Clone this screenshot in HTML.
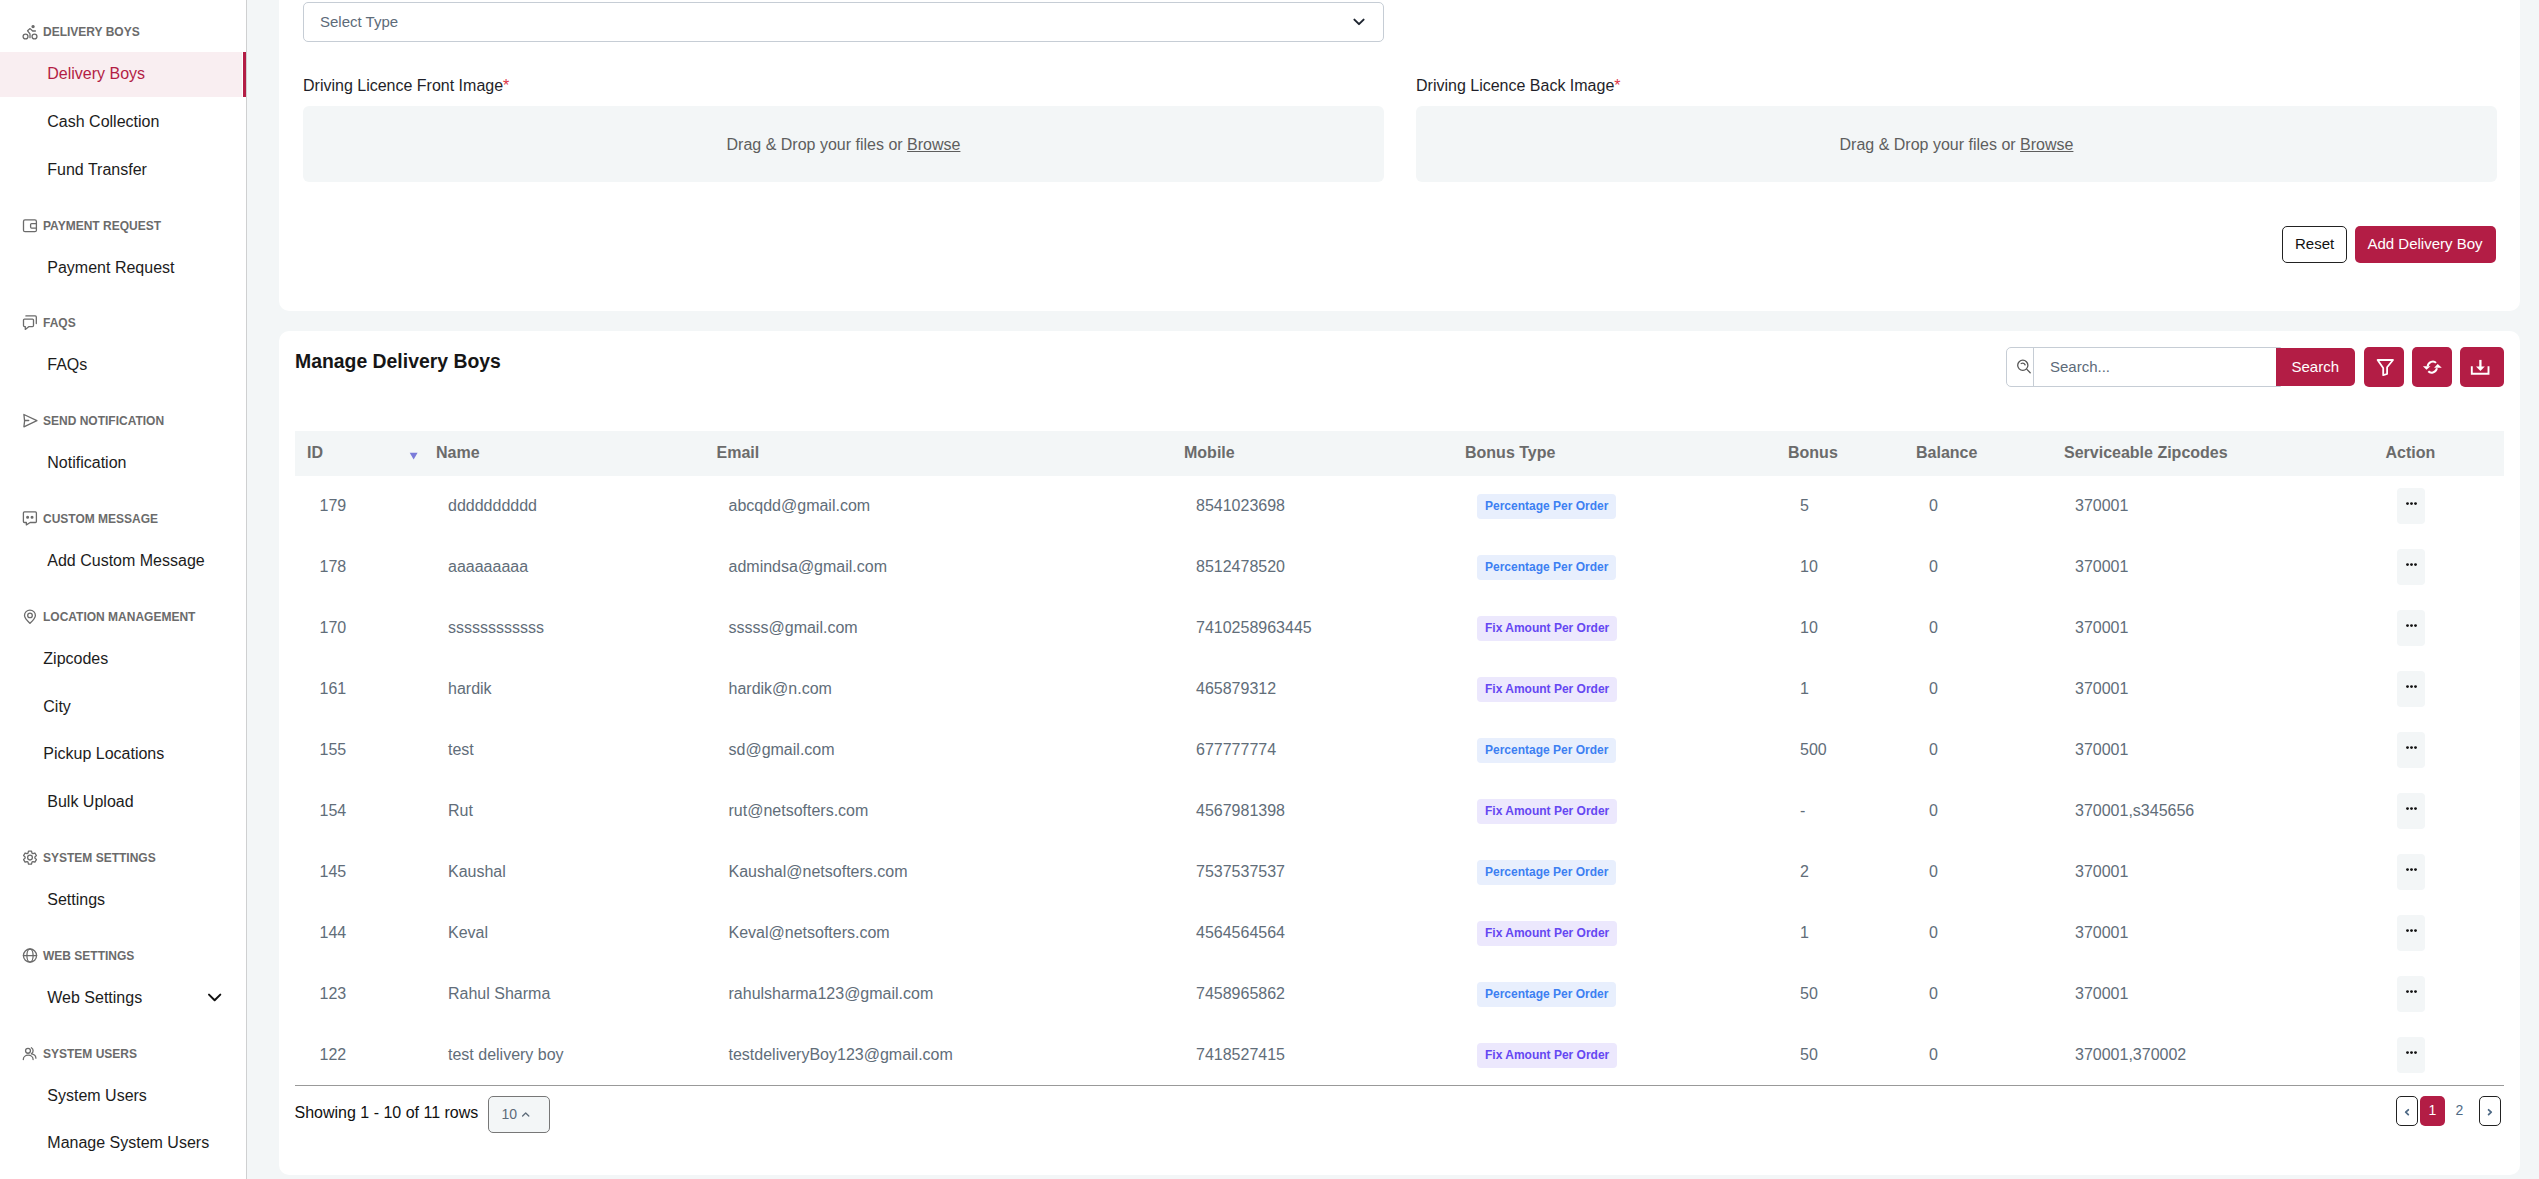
<!DOCTYPE html>
<html><head><meta charset="utf-8"><style>
*{box-sizing:border-box;margin:0;padding:0}
html,body{width:2539px;height:1179px;overflow:hidden}
body{background:#f3f6f7;font-family:"Liberation Sans",sans-serif;position:relative}
.t{position:absolute;white-space:nowrap;line-height:1}
.abs{position:absolute}
svg{position:absolute;overflow:visible}
</style></head><body>
<div class="abs" style="left:0;top:0;width:246px;height:1179px;background:#fff"></div><div class="abs" style="left:246px;top:0;width:1px;height:1179px;background:#cfd0d1"></div><div class="abs" style="left:0;top:52px;width:242px;height:45px;background:#f9eef1"></div><div class="abs" style="left:243px;top:52px;width:3px;height:45px;background:#b31d45"></div><div class="t" style="left:43px;top:26px;font-size:12px;color:#6b6b6b;font-weight:bold;">DELIVERY BOYS</div>
<div class="t" style="left:43px;top:220px;font-size:12px;color:#6b6b6b;font-weight:bold;">PAYMENT REQUEST</div>
<div class="t" style="left:43px;top:317px;font-size:12px;color:#6b6b6b;font-weight:bold;">FAQS</div>
<div class="t" style="left:43px;top:415px;font-size:12px;color:#6b6b6b;font-weight:bold;">SEND NOTIFICATION</div>
<div class="t" style="left:43px;top:513px;font-size:12px;color:#6b6b6b;font-weight:bold;">CUSTOM MESSAGE</div>
<div class="t" style="left:43px;top:611px;font-size:12px;color:#6b6b6b;font-weight:bold;">LOCATION MANAGEMENT</div>
<div class="t" style="left:43px;top:852px;font-size:12px;color:#6b6b6b;font-weight:bold;">SYSTEM SETTINGS</div>
<div class="t" style="left:43px;top:950px;font-size:12px;color:#6b6b6b;font-weight:bold;">WEB SETTINGS</div>
<div class="t" style="left:43px;top:1048px;font-size:12px;color:#6b6b6b;font-weight:bold;">SYSTEM USERS</div>
<div class="t" style="left:47.3px;top:66px;font-size:16px;color:#b31d45;font-weight:normal;">Delivery Boys</div>
<div class="t" style="left:47.3px;top:114px;font-size:16px;color:#1c1c1c;font-weight:normal;">Cash Collection</div>
<div class="t" style="left:47.3px;top:162px;font-size:16px;color:#1c1c1c;font-weight:normal;">Fund Transfer</div>
<div class="t" style="left:47.3px;top:260px;font-size:16px;color:#1c1c1c;font-weight:normal;">Payment Request</div>
<div class="t" style="left:47.3px;top:357px;font-size:16px;color:#1c1c1c;font-weight:normal;">FAQs</div>
<div class="t" style="left:47.3px;top:455px;font-size:16px;color:#1c1c1c;font-weight:normal;">Notification</div>
<div class="t" style="left:47.3px;top:553px;font-size:16px;color:#1c1c1c;font-weight:normal;">Add Custom Message</div>
<div class="t" style="left:43.3px;top:651px;font-size:16px;color:#1c1c1c;font-weight:normal;">Zipcodes</div>
<div class="t" style="left:43.3px;top:699px;font-size:16px;color:#1c1c1c;font-weight:normal;">City</div>
<div class="t" style="left:43.3px;top:746px;font-size:16px;color:#1c1c1c;font-weight:normal;">Pickup Locations</div>
<div class="t" style="left:47.3px;top:794px;font-size:16px;color:#1c1c1c;font-weight:normal;">Bulk Upload</div>
<div class="t" style="left:47.3px;top:892px;font-size:16px;color:#1c1c1c;font-weight:normal;">Settings</div>
<div class="t" style="left:47.3px;top:990px;font-size:16px;color:#1c1c1c;font-weight:normal;">Web Settings</div>
<div class="t" style="left:47.3px;top:1088px;font-size:16px;color:#1c1c1c;font-weight:normal;">System Users</div>
<div class="t" style="left:47.3px;top:1135px;font-size:16px;color:#1c1c1c;font-weight:normal;">Manage System Users</div>
<div class="abs" style="left:279px;top:-20px;width:2241px;height:331px;background:#fff;border-radius:10px"></div><div class="abs" style="left:303px;top:2px;width:1081px;height:40px;border:1px solid #c6cdd5;border-radius:5px;background:#fff"></div><div class="t" style="left:320px;top:14px;font-size:15px;color:#5d6b79;font-weight:normal;">Select Type</div>
<div class="t" style="left:303px;top:78px;font-size:16px;color:#1f1f2a;font-weight:normal;">Driving Licence Front Image<span style="color:#dc3545">*</span></div>
<div class="t" style="left:1416px;top:78px;font-size:16px;color:#1f1f2a;font-weight:normal;">Driving Licence Back Image<span style="color:#dc3545">*</span></div>
<div class="abs" style="left:303px;top:106px;width:1081px;height:76px;background:#f3f6f7;border-radius:6px"></div><div class="t" style="left:303px;width:1081px;text-align:center;top:137px;font-size:16px;color:#5e5e5e">Drag &amp; Drop your files or <span style="text-decoration:underline">Browse</span></div><div class="abs" style="left:1416px;top:106px;width:1081px;height:76px;background:#f3f6f7;border-radius:6px"></div><div class="t" style="left:1416px;width:1081px;text-align:center;top:137px;font-size:16px;color:#5e5e5e">Drag &amp; Drop your files or <span style="text-decoration:underline">Browse</span></div><div class="abs" style="left:2282px;top:226px;width:65px;height:37px;border:1px solid #222;border-radius:5px;background:#fff"></div><div class="t" style="left:2295px;top:236px;font-size:15px;color:#111;font-weight:normal;">Reset</div>
<div class="abs" style="left:2355px;top:226px;width:141px;height:37px;border-radius:5px;background:#b31d45"></div><div class="t" style="left:2367.5px;top:236px;font-size:15px;color:#fff;font-weight:normal;">Add Delivery Boy</div>
<div class="abs" style="left:279px;top:331px;width:2241px;height:844px;background:#fff;border-radius:10px"></div><div class="t" style="left:295px;top:352px;font-size:19.4px;color:#161616;font-weight:bold;">Manage Delivery Boys</div>
<div class="abs" style="left:2006px;top:347px;width:275px;height:40px;border:1px solid #c6cdd5;border-radius:5px 0 0 5px;background:#fff"></div><div class="abs" style="left:2033px;top:347px;width:1px;height:40px;background:#c6cdd5"></div><div class="t" style="left:2050px;top:359px;font-size:15px;color:#5d6b79;font-weight:normal;">Search...</div>
<div class="abs" style="left:2276px;top:348px;width:79px;height:38px;border-radius:0 5px 5px 0;background:#b31d45"></div><div class="t" style="left:2291.5px;top:359px;font-size:15px;color:#fff;font-weight:normal;">Search</div>
<div class="abs" style="left:2364px;top:347px;width:40px;height:40px;border-radius:5px;background:#b31d45"></div><div class="abs" style="left:2412px;top:347px;width:40px;height:40px;border-radius:5px;background:#b31d45"></div><div class="abs" style="left:2460px;top:347px;width:44px;height:40px;border-radius:5px;background:#b31d45"></div><div class="abs" style="left:295px;top:431px;width:2209px;height:45px;background:#f3f6f7"></div><div class="t" style="left:307px;top:445px;font-size:16px;color:#6b6b6b;font-weight:bold;">ID</div>
<div class="t" style="left:436px;top:445px;font-size:16px;color:#6b6b6b;font-weight:bold;">Name</div>
<div class="t" style="left:716.5px;top:445px;font-size:16px;color:#6b6b6b;font-weight:bold;">Email</div>
<div class="t" style="left:1184px;top:445px;font-size:16px;color:#6b6b6b;font-weight:bold;">Mobile</div>
<div class="t" style="left:1465px;top:445px;font-size:16px;color:#6b6b6b;font-weight:bold;">Bonus Type</div>
<div class="t" style="left:1788px;top:445px;font-size:16px;color:#6b6b6b;font-weight:bold;">Bonus</div>
<div class="t" style="left:1916px;top:445px;font-size:16px;color:#6b6b6b;font-weight:bold;">Balance</div>
<div class="t" style="left:2064px;top:445px;font-size:16px;color:#6b6b6b;font-weight:bold;">Serviceable Zipcodes</div>
<div class="t" style="left:2385.5px;top:445px;font-size:16px;color:#6b6b6b;font-weight:bold;">Action</div>
<div class="t" style="left:319.5px;top:498px;font-size:16px;color:#616d79;font-weight:normal;">179</div>
<div class="t" style="left:448px;top:498px;font-size:16px;color:#616d79;font-weight:normal;">dddddddddd</div>
<div class="t" style="left:728.5px;top:498px;font-size:16px;color:#616d79;font-weight:normal;">abcqdd@gmail.com</div>
<div class="t" style="left:1196px;top:498px;font-size:16px;color:#616d79;font-weight:normal;">8541023698</div>
<div class="abs" style="left:1477px;top:494.0px;width:139px;height:25px;border-radius:4px;background:#e8effd"></div><div class="t" style="left:1485px;top:500px;font-size:12px;color:#3d7ff2;font-weight:bold;">Percentage Per Order</div>
<div class="t" style="left:1800px;top:498px;font-size:16px;color:#616d79;font-weight:normal;">5</div>
<div class="t" style="left:1929px;top:498px;font-size:16px;color:#616d79;font-weight:normal;">0</div>
<div class="t" style="left:2075px;top:498px;font-size:16px;color:#616d79;font-weight:normal;">370001</div>
<div class="abs" style="left:2397px;top:488.0px;width:28px;height:36px;border-radius:4px;background:#f3f6f7"></div><div class="t" style="left:319.5px;top:559px;font-size:16px;color:#616d79;font-weight:normal;">178</div>
<div class="t" style="left:448px;top:559px;font-size:16px;color:#616d79;font-weight:normal;">aaaaaaaaa</div>
<div class="t" style="left:728.5px;top:559px;font-size:16px;color:#616d79;font-weight:normal;">admindsa@gmail.com</div>
<div class="t" style="left:1196px;top:559px;font-size:16px;color:#616d79;font-weight:normal;">8512478520</div>
<div class="abs" style="left:1477px;top:555.0px;width:139px;height:25px;border-radius:4px;background:#e8effd"></div><div class="t" style="left:1485px;top:561px;font-size:12px;color:#3d7ff2;font-weight:bold;">Percentage Per Order</div>
<div class="t" style="left:1800px;top:559px;font-size:16px;color:#616d79;font-weight:normal;">10</div>
<div class="t" style="left:1929px;top:559px;font-size:16px;color:#616d79;font-weight:normal;">0</div>
<div class="t" style="left:2075px;top:559px;font-size:16px;color:#616d79;font-weight:normal;">370001</div>
<div class="abs" style="left:2397px;top:549.0px;width:28px;height:36px;border-radius:4px;background:#f3f6f7"></div><div class="t" style="left:319.5px;top:620px;font-size:16px;color:#616d79;font-weight:normal;">170</div>
<div class="t" style="left:448px;top:620px;font-size:16px;color:#616d79;font-weight:normal;">ssssssssssss</div>
<div class="t" style="left:728.5px;top:620px;font-size:16px;color:#616d79;font-weight:normal;">sssss@gmail.com</div>
<div class="t" style="left:1196px;top:620px;font-size:16px;color:#616d79;font-weight:normal;">7410258963445</div>
<div class="abs" style="left:1477px;top:616.0px;width:140px;height:25px;border-radius:4px;background:#ece8fd"></div><div class="t" style="left:1485px;top:622px;font-size:12px;color:#6547f2;font-weight:bold;">Fix Amount Per Order</div>
<div class="t" style="left:1800px;top:620px;font-size:16px;color:#616d79;font-weight:normal;">10</div>
<div class="t" style="left:1929px;top:620px;font-size:16px;color:#616d79;font-weight:normal;">0</div>
<div class="t" style="left:2075px;top:620px;font-size:16px;color:#616d79;font-weight:normal;">370001</div>
<div class="abs" style="left:2397px;top:610.0px;width:28px;height:36px;border-radius:4px;background:#f3f6f7"></div><div class="t" style="left:319.5px;top:681px;font-size:16px;color:#616d79;font-weight:normal;">161</div>
<div class="t" style="left:448px;top:681px;font-size:16px;color:#616d79;font-weight:normal;">hardik</div>
<div class="t" style="left:728.5px;top:681px;font-size:16px;color:#616d79;font-weight:normal;">hardik@n.com</div>
<div class="t" style="left:1196px;top:681px;font-size:16px;color:#616d79;font-weight:normal;">465879312</div>
<div class="abs" style="left:1477px;top:677.0px;width:140px;height:25px;border-radius:4px;background:#ece8fd"></div><div class="t" style="left:1485px;top:683px;font-size:12px;color:#6547f2;font-weight:bold;">Fix Amount Per Order</div>
<div class="t" style="left:1800px;top:681px;font-size:16px;color:#616d79;font-weight:normal;">1</div>
<div class="t" style="left:1929px;top:681px;font-size:16px;color:#616d79;font-weight:normal;">0</div>
<div class="t" style="left:2075px;top:681px;font-size:16px;color:#616d79;font-weight:normal;">370001</div>
<div class="abs" style="left:2397px;top:671.0px;width:28px;height:36px;border-radius:4px;background:#f3f6f7"></div><div class="t" style="left:319.5px;top:742px;font-size:16px;color:#616d79;font-weight:normal;">155</div>
<div class="t" style="left:448px;top:742px;font-size:16px;color:#616d79;font-weight:normal;">test</div>
<div class="t" style="left:728.5px;top:742px;font-size:16px;color:#616d79;font-weight:normal;">sd@gmail.com</div>
<div class="t" style="left:1196px;top:742px;font-size:16px;color:#616d79;font-weight:normal;">677777774</div>
<div class="abs" style="left:1477px;top:738.0px;width:139px;height:25px;border-radius:4px;background:#e8effd"></div><div class="t" style="left:1485px;top:744px;font-size:12px;color:#3d7ff2;font-weight:bold;">Percentage Per Order</div>
<div class="t" style="left:1800px;top:742px;font-size:16px;color:#616d79;font-weight:normal;">500</div>
<div class="t" style="left:1929px;top:742px;font-size:16px;color:#616d79;font-weight:normal;">0</div>
<div class="t" style="left:2075px;top:742px;font-size:16px;color:#616d79;font-weight:normal;">370001</div>
<div class="abs" style="left:2397px;top:732.0px;width:28px;height:36px;border-radius:4px;background:#f3f6f7"></div><div class="t" style="left:319.5px;top:803px;font-size:16px;color:#616d79;font-weight:normal;">154</div>
<div class="t" style="left:448px;top:803px;font-size:16px;color:#616d79;font-weight:normal;">Rut</div>
<div class="t" style="left:728.5px;top:803px;font-size:16px;color:#616d79;font-weight:normal;">rut@netsofters.com</div>
<div class="t" style="left:1196px;top:803px;font-size:16px;color:#616d79;font-weight:normal;">4567981398</div>
<div class="abs" style="left:1477px;top:799.0px;width:140px;height:25px;border-radius:4px;background:#ece8fd"></div><div class="t" style="left:1485px;top:805px;font-size:12px;color:#6547f2;font-weight:bold;">Fix Amount Per Order</div>
<div class="t" style="left:1800px;top:803px;font-size:16px;color:#616d79;font-weight:normal;">-</div>
<div class="t" style="left:1929px;top:803px;font-size:16px;color:#616d79;font-weight:normal;">0</div>
<div class="t" style="left:2075px;top:803px;font-size:16px;color:#616d79;font-weight:normal;">370001,s345656</div>
<div class="abs" style="left:2397px;top:793.0px;width:28px;height:36px;border-radius:4px;background:#f3f6f7"></div><div class="t" style="left:319.5px;top:864px;font-size:16px;color:#616d79;font-weight:normal;">145</div>
<div class="t" style="left:448px;top:864px;font-size:16px;color:#616d79;font-weight:normal;">Kaushal</div>
<div class="t" style="left:728.5px;top:864px;font-size:16px;color:#616d79;font-weight:normal;">Kaushal@netsofters.com</div>
<div class="t" style="left:1196px;top:864px;font-size:16px;color:#616d79;font-weight:normal;">7537537537</div>
<div class="abs" style="left:1477px;top:860.0px;width:139px;height:25px;border-radius:4px;background:#e8effd"></div><div class="t" style="left:1485px;top:866px;font-size:12px;color:#3d7ff2;font-weight:bold;">Percentage Per Order</div>
<div class="t" style="left:1800px;top:864px;font-size:16px;color:#616d79;font-weight:normal;">2</div>
<div class="t" style="left:1929px;top:864px;font-size:16px;color:#616d79;font-weight:normal;">0</div>
<div class="t" style="left:2075px;top:864px;font-size:16px;color:#616d79;font-weight:normal;">370001</div>
<div class="abs" style="left:2397px;top:854.0px;width:28px;height:36px;border-radius:4px;background:#f3f6f7"></div><div class="t" style="left:319.5px;top:925px;font-size:16px;color:#616d79;font-weight:normal;">144</div>
<div class="t" style="left:448px;top:925px;font-size:16px;color:#616d79;font-weight:normal;">Keval</div>
<div class="t" style="left:728.5px;top:925px;font-size:16px;color:#616d79;font-weight:normal;">Keval@netsofters.com</div>
<div class="t" style="left:1196px;top:925px;font-size:16px;color:#616d79;font-weight:normal;">4564564564</div>
<div class="abs" style="left:1477px;top:921.0px;width:140px;height:25px;border-radius:4px;background:#ece8fd"></div><div class="t" style="left:1485px;top:927px;font-size:12px;color:#6547f2;font-weight:bold;">Fix Amount Per Order</div>
<div class="t" style="left:1800px;top:925px;font-size:16px;color:#616d79;font-weight:normal;">1</div>
<div class="t" style="left:1929px;top:925px;font-size:16px;color:#616d79;font-weight:normal;">0</div>
<div class="t" style="left:2075px;top:925px;font-size:16px;color:#616d79;font-weight:normal;">370001</div>
<div class="abs" style="left:2397px;top:915.0px;width:28px;height:36px;border-radius:4px;background:#f3f6f7"></div><div class="t" style="left:319.5px;top:986px;font-size:16px;color:#616d79;font-weight:normal;">123</div>
<div class="t" style="left:448px;top:986px;font-size:16px;color:#616d79;font-weight:normal;">Rahul Sharma</div>
<div class="t" style="left:728.5px;top:986px;font-size:16px;color:#616d79;font-weight:normal;">rahulsharma123@gmail.com</div>
<div class="t" style="left:1196px;top:986px;font-size:16px;color:#616d79;font-weight:normal;">7458965862</div>
<div class="abs" style="left:1477px;top:982.0px;width:139px;height:25px;border-radius:4px;background:#e8effd"></div><div class="t" style="left:1485px;top:988px;font-size:12px;color:#3d7ff2;font-weight:bold;">Percentage Per Order</div>
<div class="t" style="left:1800px;top:986px;font-size:16px;color:#616d79;font-weight:normal;">50</div>
<div class="t" style="left:1929px;top:986px;font-size:16px;color:#616d79;font-weight:normal;">0</div>
<div class="t" style="left:2075px;top:986px;font-size:16px;color:#616d79;font-weight:normal;">370001</div>
<div class="abs" style="left:2397px;top:976.0px;width:28px;height:36px;border-radius:4px;background:#f3f6f7"></div><div class="t" style="left:319.5px;top:1047px;font-size:16px;color:#616d79;font-weight:normal;">122</div>
<div class="t" style="left:448px;top:1047px;font-size:16px;color:#616d79;font-weight:normal;">test delivery boy</div>
<div class="t" style="left:728.5px;top:1047px;font-size:16px;color:#616d79;font-weight:normal;">testdeliveryBoy123@gmail.com</div>
<div class="t" style="left:1196px;top:1047px;font-size:16px;color:#616d79;font-weight:normal;">7418527415</div>
<div class="abs" style="left:1477px;top:1043.0px;width:140px;height:25px;border-radius:4px;background:#ece8fd"></div><div class="t" style="left:1485px;top:1049px;font-size:12px;color:#6547f2;font-weight:bold;">Fix Amount Per Order</div>
<div class="t" style="left:1800px;top:1047px;font-size:16px;color:#616d79;font-weight:normal;">50</div>
<div class="t" style="left:1929px;top:1047px;font-size:16px;color:#616d79;font-weight:normal;">0</div>
<div class="t" style="left:2075px;top:1047px;font-size:16px;color:#616d79;font-weight:normal;">370001,370002</div>
<div class="abs" style="left:2397px;top:1037.0px;width:28px;height:36px;border-radius:4px;background:#f3f6f7"></div><div class="abs" style="left:295px;top:1085px;width:2209px;height:1px;background:#999"></div><div class="t" style="left:294.5px;top:1105px;font-size:16px;color:#111;font-weight:normal;">Showing 1 - 10 of 11 rows</div>
<div class="abs" style="left:488px;top:1096px;width:62px;height:37px;border:1px solid #777;border-radius:5px;background:#f3f6f7"></div><div class="t" style="left:501.5px;top:1107px;font-size:14px;color:#5d6b79;font-weight:normal;">10</div>
<div class="abs" style="left:2396px;top:1096px;width:22px;height:30px;border:1px solid #222;border-radius:5px;background:#fff"></div><div class="abs" style="left:2420px;top:1096px;width:25px;height:30px;border-radius:5px;background:#b31d45"></div><div class="t" style="left:2428.5px;top:1103px;font-size:14px;color:#fff;font-weight:normal;">1</div>
<div class="t" style="left:2455.5px;top:1103px;font-size:14px;color:#4f6a86;font-weight:normal;">2</div>
<div class="abs" style="left:2479px;top:1096px;width:22px;height:30px;border:1px solid #222;border-radius:5px;background:#fff"></div><svg style="left:0;top:0" width="2539" height="1179" viewBox="0 0 2539 1179"><g fill="none" stroke="#6b6b6b" stroke-width="1.3" stroke-linecap="round" stroke-linejoin="round"><circle cx="25.54" cy="36.5" r="2.45"/><circle cx="34.5" cy="36.5" r="2.45"/><circle cx="33.07" cy="26.6" r="1.05" fill="#6b6b6b"/><path d="M30 37.7 V33.85 L27.57 30.8 L30.1 28.6 L32.66 31 H35.4"/><rect x="23.5" y="219.9" width="12.9" height="11.8" rx="1.5"/><path d="M36.4 223.6 H31.6 A1 1 0 0 0 30.6 224.6 V227.05 A1 1 0 0 0 31.6 228.05 H36.4"/><path d="M24.5 319.1 H32.5 A1 1 0 0 1 33.5 320.1 V325.6 A1 1 0 0 1 32.5 326.6 H29 L25.3 329.4 V326.6 H24.5 A1 1 0 0 1 23.5 325.6 V320.1 A1 1 0 0 1 24.5 319.1 Z"/><path d="M25.9 315.9 H35.3 A1 1 0 0 1 36.3 316.9 V323.6"/><path d="M23.9 414.5 L36.9 420.6 L23.9 426.8 Q25.2 420.6 23.9 414.5 Z"/><path d="M24.8 420.6 H28.6" stroke-width="1.5"/><path d="M24.4 511.9 H35.4 A1 1 0 0 1 36.4 512.9 V521.5 A1 1 0 0 1 35.4 522.5 H30.2 L26.35 524.9 V522.5 H24.4 A1 1 0 0 1 23.4 521.5 V512.9 A1 1 0 0 1 24.4 511.9 Z"/><circle cx="27.6" cy="517.2" r="0.85" fill="#6b6b6b"/><circle cx="32.05" cy="517.2" r="0.85" fill="#6b6b6b"/><path d="M30 623.3 C28 621.4 24.5 618.3 24.5 615.5 A5.45 5.45 0 0 1 35.4 615.5 C35.4 618.3 32 621.4 30 623.3 Z"/><circle cx="30" cy="615.4" r="2.3"/><path d="M28.01 853.12 L28.49 851.07 L31.51 851.07 L31.99 853.12 L32.88 853.64 L34.90 853.03 L36.41 855.64 L34.87 857.09 L34.87 858.11 L36.41 859.56 L34.90 862.17 L32.88 861.56 L31.99 862.08 L31.51 864.13 L28.49 864.13 L28.01 862.08 L27.12 861.56 L25.10 862.17 L23.59 859.56 L25.13 858.11 L25.13 857.09 L23.59 855.64 L25.10 853.03 L27.12 853.64 Z"/><circle cx="30" cy="857.6" r="2.4"/><circle cx="30" cy="955.6" r="6.6"/><path d="M23.4 955.6 H36.6"/><ellipse cx="30" cy="955.6" rx="3.1" ry="6.6"/><circle cx="28" cy="1050.8" r="2.45"/><path d="M23.3 1059.5 A4.9 4.3 0 0 1 33.1 1059.5"/><path d="M31.4 1047.7 A3.4 3.4 0 0 1 31.4 1053.6"/><path d="M31.7 1053.9 Q35.9 1054.8 35.9 1058.2"/></g><path d="M209 994.6 L214.65 1000.2 L220.3 994.6" fill="none" stroke="#111" stroke-width="2" stroke-linecap="round" stroke-linejoin="round"/><path d="M1354.4 19.6 L1359 24.15 L1363.6 19.6" fill="none" stroke="#1e2530" stroke-width="2" stroke-linecap="round" stroke-linejoin="round"/><g fill="none" stroke="#555" stroke-width="1.3" stroke-linecap="round"><circle cx="2022.8" cy="365.3" r="5.1"/><path d="M2026.9 369.4 L2030.2 372.7"/><path d="M2021.2 363.5 A3 3 0 0 1 2025.1 364.9"/></g><path d="M2377.6 360 H2393 L2387.1 367.2 V374 L2383.2 375.2 V367.9 Z" fill="none" stroke="#fff" stroke-width="1.8" stroke-linejoin="round"/><g fill="none" stroke="#fff" stroke-width="2"><path d="M2427.6 366.4 C2428.2 361.6 2433.6 360.2 2436 362.9"/><path d="M2428.3 371.3 C2430.5 373.6 2435.6 373.2 2437 368.2"/></g><path d="M2422.9 366.25 L2430.5 366.25 L2426.5 369.85 Z M2434.1 367.7 L2441.8 367.7 L2437.7 363.9 Z" fill="#fff"/><path d="M2471.8 366.2 V373.7 H2488.5 V366.2" fill="none" stroke="#fff" stroke-width="1.9"/><path d="M2480.4 359.9 V367.7" stroke="#fff" stroke-width="2.3"/><path d="M2476 366.45 L2484.8 366.45 L2480.4 371.1 Z" fill="#fff"/><path d="M409.7 452.8 H417.6 L413.65 459.6 Z" fill="#7a7bd9"/><g fill="#111"><circle cx="2407.5" cy="503.6" r="1.4"/><circle cx="2411.5" cy="503.6" r="1.4"/><circle cx="2415.5" cy="503.6" r="1.4"/></g><g fill="#111"><circle cx="2407.5" cy="564.6" r="1.4"/><circle cx="2411.5" cy="564.6" r="1.4"/><circle cx="2415.5" cy="564.6" r="1.4"/></g><g fill="#111"><circle cx="2407.5" cy="625.6" r="1.4"/><circle cx="2411.5" cy="625.6" r="1.4"/><circle cx="2415.5" cy="625.6" r="1.4"/></g><g fill="#111"><circle cx="2407.5" cy="686.6" r="1.4"/><circle cx="2411.5" cy="686.6" r="1.4"/><circle cx="2415.5" cy="686.6" r="1.4"/></g><g fill="#111"><circle cx="2407.5" cy="747.6" r="1.4"/><circle cx="2411.5" cy="747.6" r="1.4"/><circle cx="2415.5" cy="747.6" r="1.4"/></g><g fill="#111"><circle cx="2407.5" cy="808.6" r="1.4"/><circle cx="2411.5" cy="808.6" r="1.4"/><circle cx="2415.5" cy="808.6" r="1.4"/></g><g fill="#111"><circle cx="2407.5" cy="869.6" r="1.4"/><circle cx="2411.5" cy="869.6" r="1.4"/><circle cx="2415.5" cy="869.6" r="1.4"/></g><g fill="#111"><circle cx="2407.5" cy="930.6" r="1.4"/><circle cx="2411.5" cy="930.6" r="1.4"/><circle cx="2415.5" cy="930.6" r="1.4"/></g><g fill="#111"><circle cx="2407.5" cy="991.6" r="1.4"/><circle cx="2411.5" cy="991.6" r="1.4"/><circle cx="2415.5" cy="991.6" r="1.4"/></g><g fill="#111"><circle cx="2407.5" cy="1052.6" r="1.4"/><circle cx="2411.5" cy="1052.6" r="1.4"/><circle cx="2415.5" cy="1052.6" r="1.4"/></g><path d="M522.6 1116 L525.7 1113 L528.8 1116" fill="none" stroke="#5d6b79" stroke-width="1.3" stroke-linecap="round" stroke-linejoin="round"/><path d="M2408.3 1109.8 L2405.7 1112.2 L2408.3 1114.6 M2488.6 1109.8 L2491.2 1112.2 L2488.6 1114.6" fill="none" stroke="#4f6a86" stroke-width="1.8" stroke-linecap="round" stroke-linejoin="round"/></svg></body></html>
